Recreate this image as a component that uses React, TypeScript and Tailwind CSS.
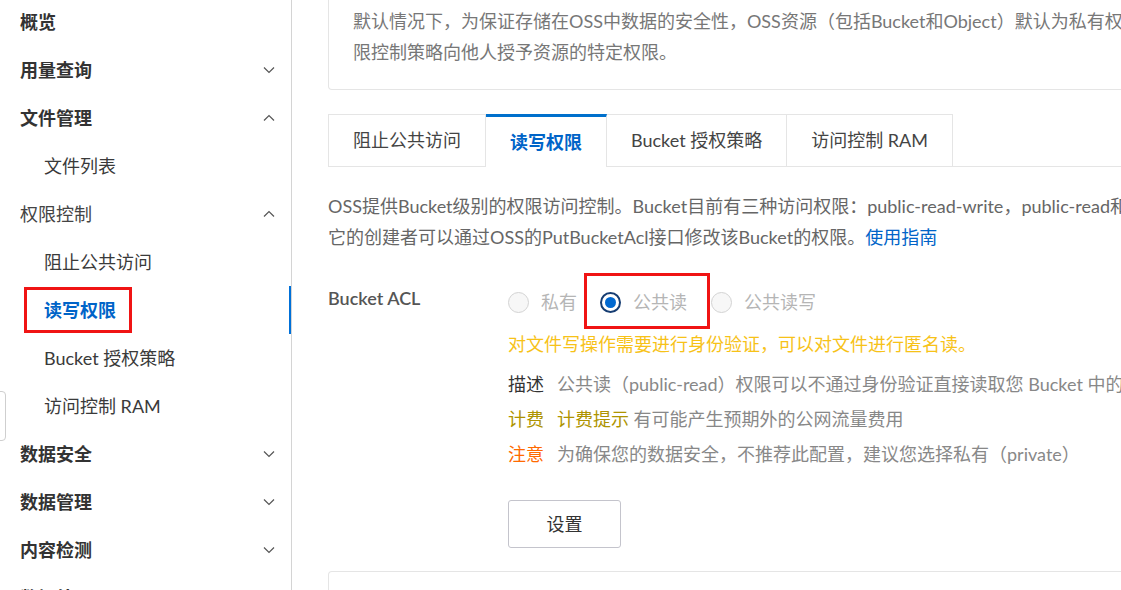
import React from "react";

type NavItem =
  | { kind: "group"; label: string; bold: boolean; chevron?: "up" | "down" }
  | { kind: "sub"; label: string; active?: boolean };

const NAV: NavItem[] = [
  { kind: "group", label: "概览", bold: true },
  { kind: "group", label: "用量查询", bold: true, chevron: "down" },
  { kind: "group", label: "文件管理", bold: true, chevron: "up" },
  { kind: "sub", label: "文件列表" },
  { kind: "group", label: "权限控制", bold: false, chevron: "up" },
  { kind: "sub", label: "阻止公共访问" },
  { kind: "sub", label: "读写权限", active: true },
  { kind: "sub", label: "Bucket 授权策略" },
  { kind: "sub", label: "访问控制 RAM" },
  { kind: "group", label: "数据安全", bold: true, chevron: "down" },
  { kind: "group", label: "数据管理", bold: true, chevron: "down" },
  { kind: "group", label: "内容检测", bold: true, chevron: "down" },
  { kind: "group", label: "数据处理", bold: true, chevron: "down" },
];

const TABS = ["阻止公共访问", "读写权限", "Bucket 授权策略", "访问控制 RAM"];

function Chevron({ dir }: { dir: "up" | "down" }) {
  return (
    <svg width="12" height="8" viewBox="0 0 12 8" className="text-[#555]">
      <path
        d={dir === "down" ? "M1 1.5l5 5 5-5" : "M1 6.5l5-5 5 5"}
        fill="none"
        stroke="currentColor"
        strokeWidth="1.2"
      />
    </svg>
  );
}

function Radio({ checked }: { checked?: boolean }) {
  if (checked) {
    return (
      <span className="w-[21px] h-[21px] rounded-full border-2 border-[#163d72] flex items-center justify-center bg-white">
        <span className="w-[11px] h-[11px] rounded-full bg-[#0068d0]" />
      </span>
    );
  }
  return <span className="w-[21px] h-[21px] rounded-full border border-[#d3d3d3] bg-[#f7f7f7]" />;
}

function Sidebar() {
  return (
    <div className="relative w-[292px] shrink-0 border-r border-[#d4d4d4]">
      <div className="-mt-[2px]">
        {NAV.map((item) =>
          item.kind === "group" ? (
            <div key={item.label} className="h-12 flex items-center justify-between pl-5 pr-4">
              <span className={item.bold ? "font-bold text-[#333]" : "text-[#444]"}>{item.label}</span>
              {item.chevron && <Chevron dir={item.chevron} />}
            </div>
          ) : item.active ? (
            <div key={item.label} className="relative h-12 flex items-center pl-6">
              <span className="h-[46px] flex items-center border-[3px] border-[#f01414] pl-[17px] pr-[13px] font-bold text-[#0064c8]">
                {item.label}
              </span>
              <span className="absolute right-0 top-0 h-12 w-[2px] bg-[#0070d8]" />
            </div>
          ) : (
            <div key={item.label} className="h-12 flex items-center pl-11 text-[#3a3a3a]">
              {item.label}
            </div>
          )
        )}
      </div>
      {/* collapse handle peeking from the left edge */}
      <div className="absolute left-[-10px] top-[391px] w-4 h-[50px] rounded border border-[#cfcfcf] bg-white" />
    </div>
  );
}

export default function App() {
  return (
    <div className="flex w-[1121px] h-[590px] overflow-hidden bg-white text-[18px] text-[#333] font-['Lato','Noto_Sans_CJK_SC',sans-serif]">
      <Sidebar />

      <div className="shrink-0 w-[1240px] pl-9">
        <div className="border-x border-b border-[#e5e5e5] rounded-b-[4px] pl-6 pt-[6px] pb-[21px] leading-[31px] text-[#777] whitespace-nowrap">
          <div>默认情况下，为保证存储在OSS中数据的安全性，OSS资源（包括Bucket和Object）默认为私有权限，仅资源拥有者或者被授权的用户允许访问。您可以通过权</div>
          <div>限控制策略向他人授予资源的特定权限。</div>
        </div>

        <div className="mt-6 flex border-b border-[#e5e5e5]">
          {TABS.map((t, i) =>
            i === 1 ? (
              <div
                key={t}
                className="h-[53px] -mb-px px-6 flex items-center bg-white border-t-[3px] border-t-[#0070cc] border-r border-r-[#e5e5e5] font-bold text-[#0064c8]"
              >
                {t}
              </div>
            ) : (
              <div
                key={t}
                className={`h-[52px] px-6 flex items-center border-t border-r border-[#e5e5e5] text-[#444] ${i === 0 ? "border-l" : ""}`}
              >
                {t}
              </div>
            )
          )}
        </div>

        <div className="mt-6 leading-[31px] text-[#666] whitespace-nowrap">
          <div>OSS提供Bucket级别的权限访问控制。Bucket目前有三种访问权限：public-read-write，public-read和private，</div>
          <div>
            它的创建者可以通过OSS的PutBucketAcl接口修改该Bucket的权限。<span className="text-[#0064c8]">使用指南</span>
          </div>
        </div>

        <div className="mt-5 flex">
          <div className="w-[180px] shrink-0 pt-[10px] leading-[31px] font-semibold text-[#555]">Bucket ACL</div>
          <div className="flex-1">
            <div className="h-[56px] flex items-center text-[#b5b5b5]">
              <div className="pt-[3px] flex items-center gap-3">
                <Radio />
                <span>私有</span>
              </div>
              <div className="ml-[7px] h-[56px] pt-[3px] flex items-center gap-3 border-[3px] border-[#f01414] pl-[13px] pr-[20px]">
                <Radio checked />
                <span>公共读</span>
              </div>
              <div className="ml-[1px] pt-[3px] flex items-center gap-3">
                <Radio />
                <span>公共读写</span>
              </div>
            </div>

            <div className="leading-[31px] text-[#f7c218] whitespace-nowrap">
              对文件写操作需要进行身份验证，可以对文件进行匿名读。
            </div>

            <div className="mt-[7px] whitespace-nowrap">
              <div className="h-[35px] flex items-center">
                <span className="w-[49px] shrink-0 text-[#333]">描述</span>
                <span className="text-[#888]">公共读（public-read）权限可以不通过身份验证直接读取您 Bucket 中的数据，安全风险高，为确保您的数据安全，不推荐此配置。</span>
              </div>
              <div className="h-[35px] flex items-center">
                <span className="w-[49px] shrink-0 text-[#ae9400]">计费</span>
                <span className="text-[#ae9400]">计费提示</span>
                <span className="text-[#888]">&nbsp;有可能产生预期外的公网流量费用</span>
              </div>
              <div className="h-[35px] flex items-center">
                <span className="w-[49px] shrink-0 text-[#ff6a00]">注意</span>
                <span className="text-[#888]">为确保您的数据安全，不推荐此配置，建议您选择私有（private）</span>
              </div>
            </div>

            <button
              type="button"
              className="mt-7 w-[113px] h-[48px] border border-[#c4c4cc] rounded-[3px] bg-white text-[#333]"
            >
              设置
            </button>
          </div>
        </div>

        <div className="mt-[23px] h-20 border-x border-t border-[#e5e5e5] rounded-t-[4px]" />
      </div>
    </div>
  );
}
